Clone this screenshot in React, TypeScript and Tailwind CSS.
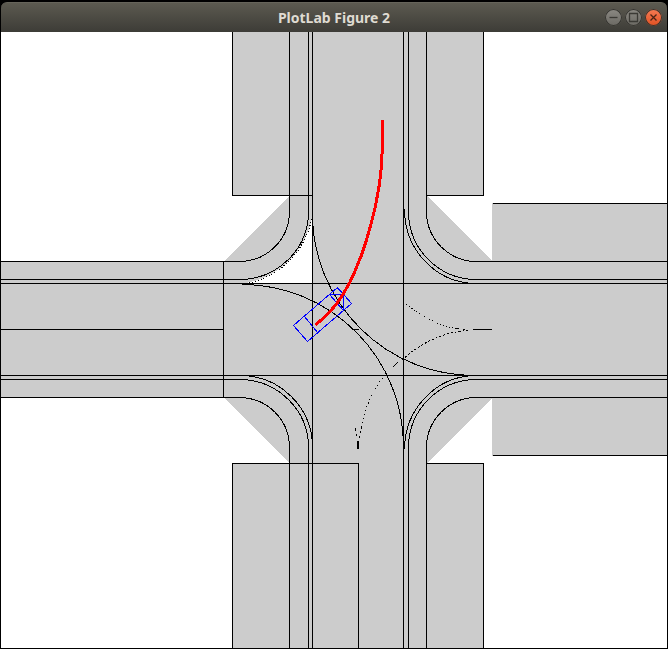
import React from "react";

type Point = [number, number];

const toPoints = (points: Point[]) => points.map((p) => p.join(",")).join(" ");

const trajectory: Point[] = [
  [315, 325], [323, 318], [329, 312], [336, 304], [342, 295], [349, 283], [355, 270],
  [361, 255], [366, 240], [370, 226], [375, 206], [379, 184], [381, 165], [382, 143], [382, 120],
];

const lanes = [
  "M289 30V211A50 50 0 0 1 239 261H-1",
  "M308 30V211A69 68 0 0 1 240 279H-1",
  "M426 30V211A50 50 0 0 0 476 261H669",
  "M408 30V211A68 68 0 0 0 476 279H669",
  "M404 209A72 74 0 0 0 474 283",
  "M289 650V447A50 50 0 0 0 239 397H-1",
  "M308 650V447A69 68 0 0 0 240 379H-1",
  "M312 447A72 72 0 0 0 240 375",
  "M426 650V447A50 50 0 0 1 476 397H669",
  "M408 650V447A68 68 0 0 1 476 379H669",
  "M404 449A72 74 0 0 1 474 375",
  "M312 30V650",
  "M403 30V650",
  "M-1 283H669",
  "M-1 375H669",
  "M-1 329H223",
  "M223 261V397",
  "M312 214A162 162 0 0 0 474 375",
  "M242 284A162 162 0 0 1 403 446",
  "M351 329H358",
  "M472 329H491",
  "M358 440V448",
];

const outlines = [
  "M232 30V195H312",
  "M426 195H483V30",
  "M232 650V463H358V650",
  "M426 463H483V650",
  "M492 203H669",
  "M492 455H669",
];

const vehicle = [
  "M293 325L307 341L351 303L337 287Z",
  "M304 316L317 332",
  "M329 294H343V310Z",
  "M337 288L343 294",
  "M343 294L350 301",
];

function Plot() {
  return (
    <svg
      viewBox="1 32 666 616"
      role="img"
      aria-label="Intersection plot"
      shapeRendering="crispEdges"
      className="block w-full bg-white"
    >
      <g fill="#cccccc">
        <path d="M232 32H484V196H232Z" />
        <path d="M232 463H484V648H232Z" />
        <path d="M492 203H667V456H492Z" />
        <path d="M1 261H224V398H1Z" />
        <path d="M223 262L290 195H426L492 261V398L427 463H290L223 397Z" />
      </g>
      <path d="M312 217V283H246A82 82 0 0 0 312 217Z" fill="#ffffff" />
      <g transform="translate(0.5 0.5)" fill="none" stroke="#000000">
        {[...outlines, ...lanes].map((d) => (
          <path key={d} d={d} />
        ))}
        <path d="M311 219A82 82 0 0 1 246 283" strokeDasharray="1 2" />
        <path d="M406 304Q434 325 456 328" strokeDasharray="1 2" />
        <path d="M456 328L468 329" strokeDasharray="3 3" />
        <path d="M468 330Q432 332 402 359" strokeDasharray="2 2" />
        <path d="M397 362L392 367" />
        <path d="M382 378Q367 395 362 424" strokeDasharray="1 3" />
        <path d="M361 426L358 440" strokeDasharray="2 3" />
        <path d="M355 428L357 438" strokeDasharray="2 4" />
        <path d="M357 440V448" />
      </g>
      <g transform="translate(0.5 0.5)" fill="none" stroke="#0000ff">
        {vehicle.map((d) => (
          <path key={d} d={d} />
        ))}
      </g>
      <polyline
        points={toPoints(trajectory)}
        transform="translate(0.5 0)"
        fill="none"
        stroke="#ff0000"
        strokeWidth="3"
      />
    </svg>
  );
}

const controls = [
  { name: "Minimize", icon: "M4.5 8.5H12.5", tone: "from-[#8b8983] to-[#6b6963] text-[#3b3a35]" },
  { name: "Maximize", icon: "M4.5 4.5H12.5V12.5H4.5Z", tone: "from-[#8b8983] to-[#6b6963] text-[#3b3a35]" },
  { name: "Close", icon: "M5.5 5.5L11.5 11.5M11.5 5.5L5.5 11.5", tone: "from-[#f47b53] to-[#e2501f] text-[#4a2415]" },
];

export default function App() {
  return (
    <div className="bg-black pt-0.5">
      <div className="border-x border-b border-black">
        <header className="grid h-[30px] grid-cols-[1fr_auto_1fr] items-center rounded-t-md border-t border-[#66645a] bg-linear-to-b from-[#5c5a50] to-[#3d3c37]">
          <h1 className="col-start-2 font-['Noto_Sans','Open_Sans',sans-serif] text-[14px] leading-5 font-bold text-[#dfdbd2]">
            PlotLab Figure 2
          </h1>
          <div className="flex justify-end gap-[3px] pr-[5px]">
            {controls.map(({ name, icon, tone }) => (
              <button
                key={name}
                type="button"
                aria-label={name}
                className={`size-[17px] rounded-full bg-linear-to-b ring-1 ring-[#35342f] ring-inset ${tone}`}
              >
                <svg viewBox="0 0 17 17" className="block size-full" fill="none" stroke="currentColor" strokeWidth="1.3">
                  <path d={icon} />
                </svg>
              </button>
            ))}
          </div>
        </header>
        <main>
          <Plot />
        </main>
      </div>
    </div>
  );
}
